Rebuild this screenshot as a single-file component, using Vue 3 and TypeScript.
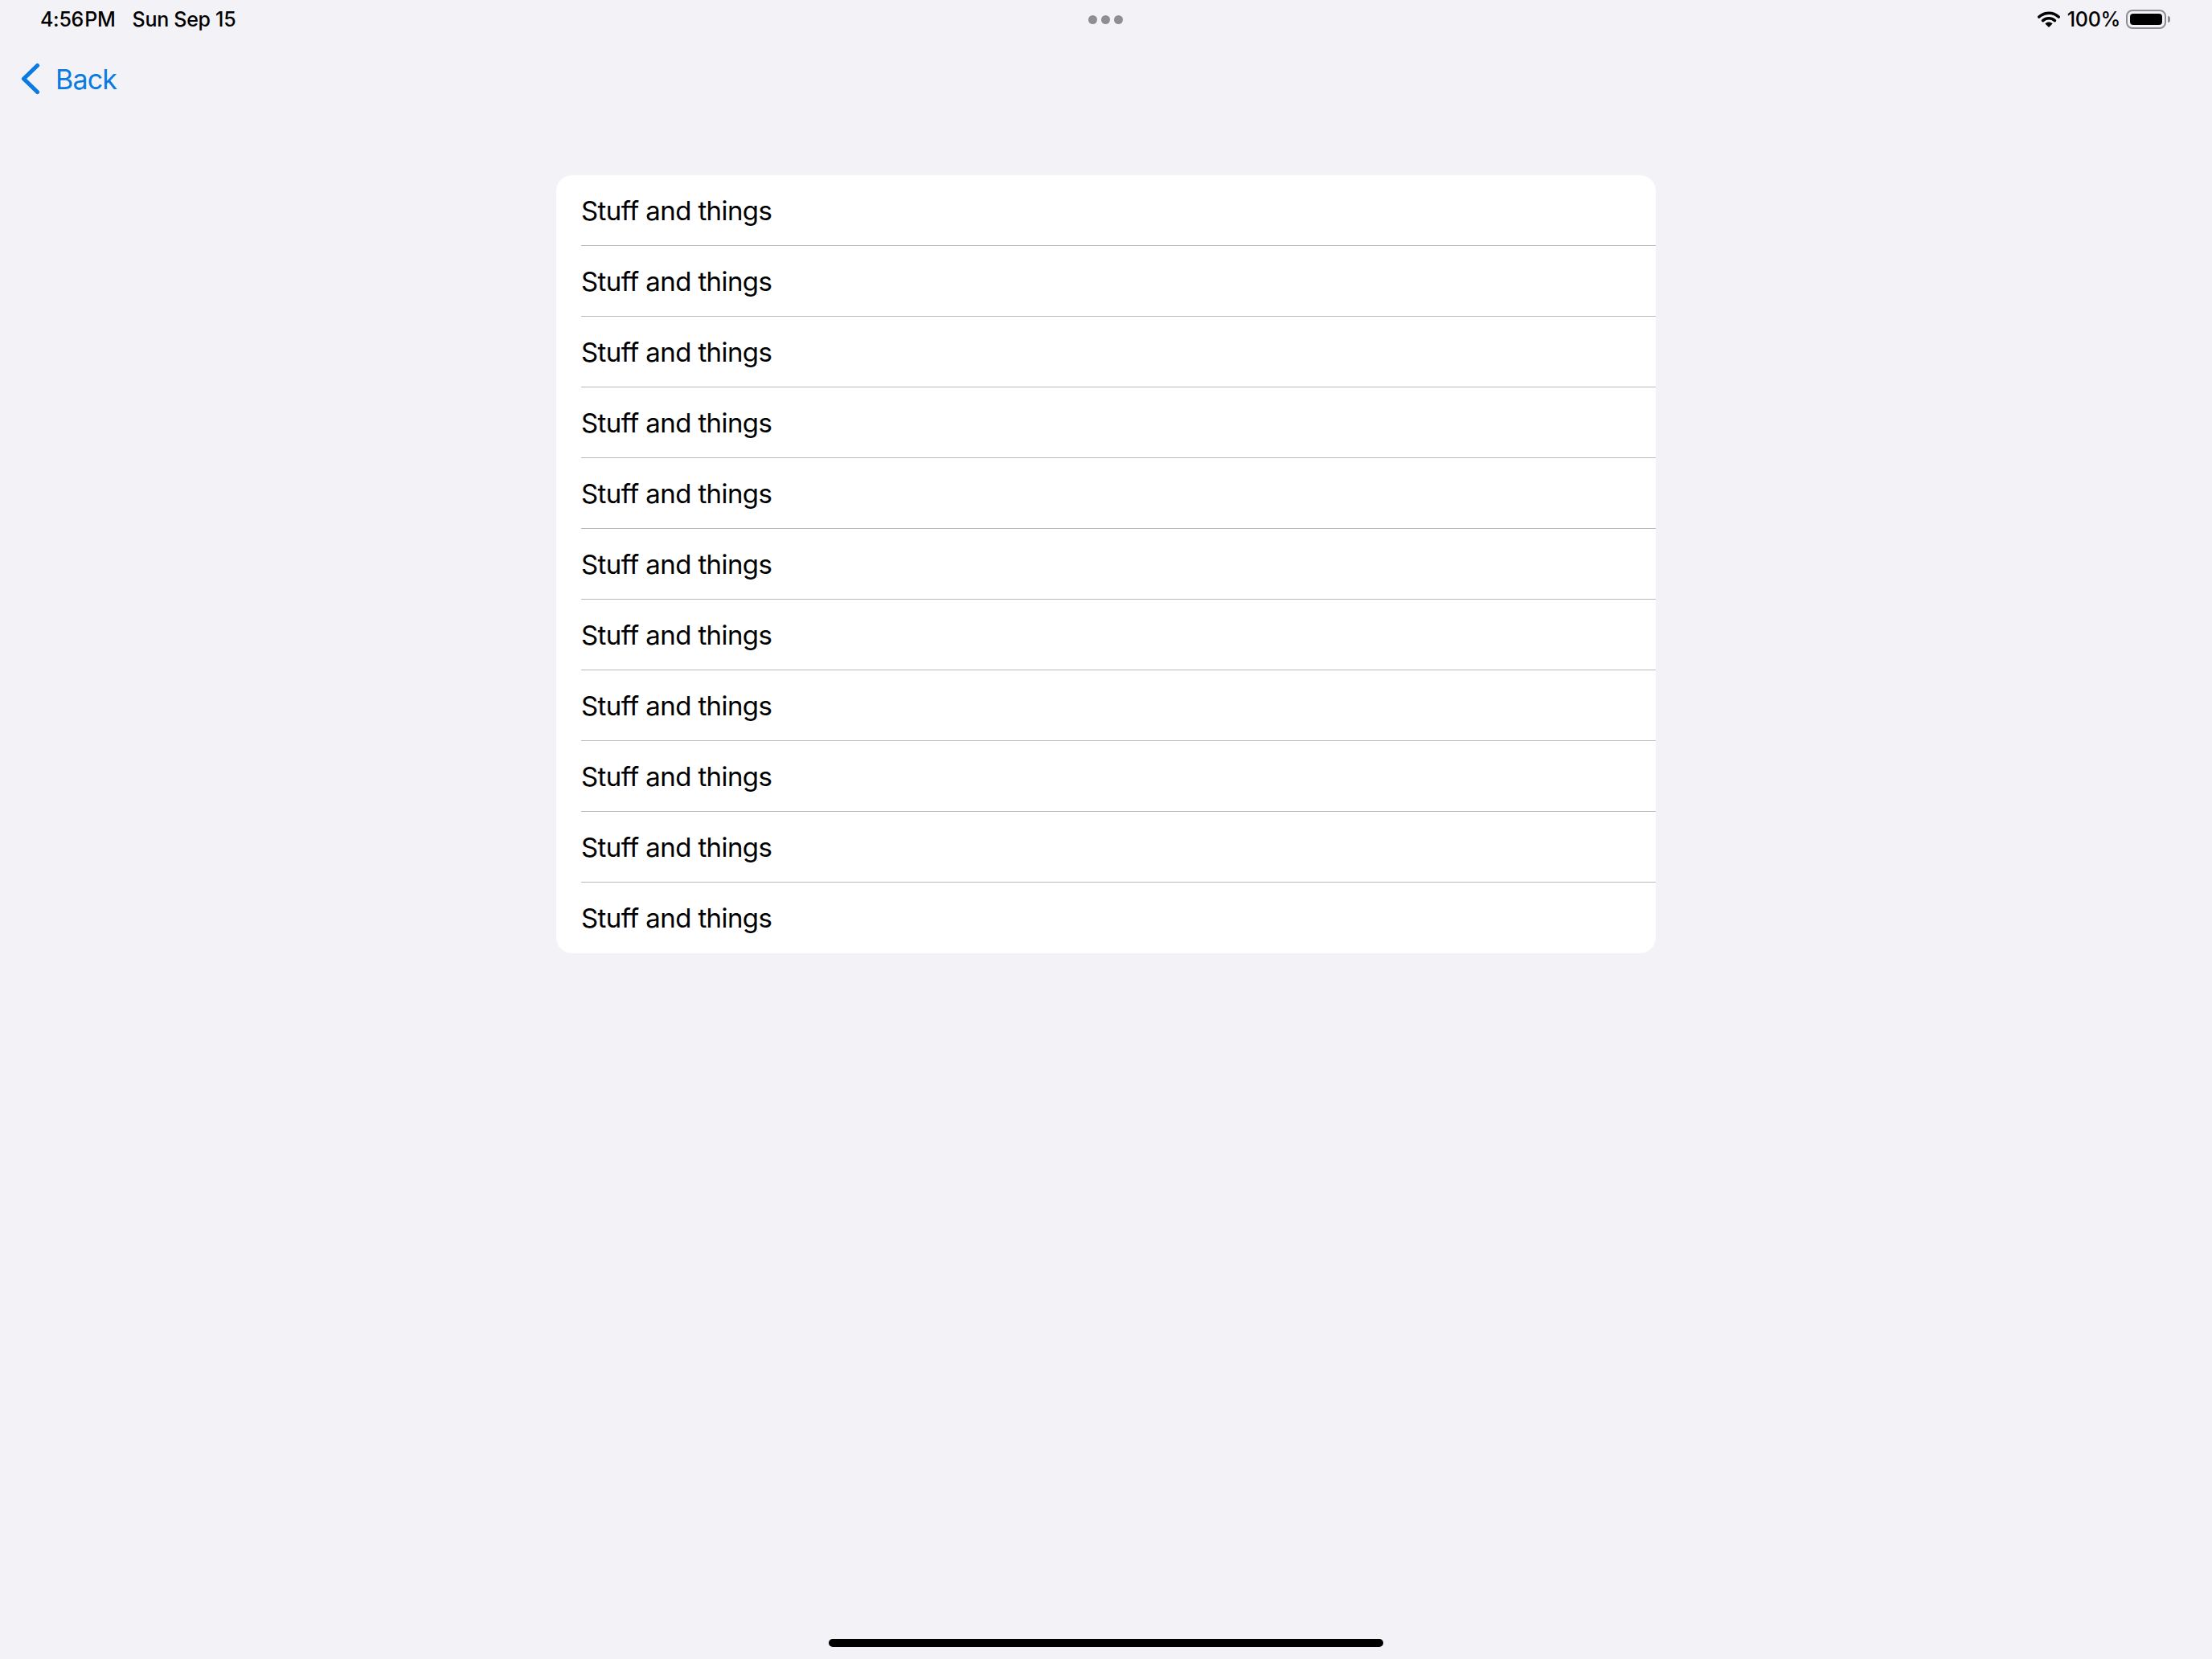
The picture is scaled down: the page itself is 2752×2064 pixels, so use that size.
<script setup lang="ts">
const rows: string[] = Array.from({ length: 11 }, () => 'Stuff and things')
</script>

<template>
  <div class="screen">
    <header class="status-bar">
      <div class="status-left">
        <span class="time">4:56 PM</span>
        <span>Sun Sep 15</span>
      </div>
      <div class="dots"><i></i><i></i><i></i></div>
      <div class="status-right">
        <svg class="wifi" width="28" height="20" viewBox="0 0 28 20">
          <path d="M1.8 7C8.8 0.6 19.2 0.6 26.2 7" fill="none" stroke="#000" stroke-width="3.6" stroke-linecap="round" />
          <path d="M6.6 11.6C10.9 7.8 17.1 7.8 21.4 11.6" fill="none" stroke="#000" stroke-width="3.6" stroke-linecap="round" />
          <path d="M14 20L9.4 15.4C12.1 13 15.9 13 18.6 15.4Z" fill="#000" />
        </svg>
        <span class="percent">100%</span>
        <div class="battery">
          <div class="battery-body"><div class="battery-fill"></div></div>
          <div class="battery-nub"></div>
        </div>
      </div>
    </header>

    <nav class="nav-bar">
      <svg class="chevron" width="26" height="40" viewBox="0 0 26 40">
        <path d="M21.5 3.5L4.5 20L21.5 36.5" fill="none" stroke="#0a7be0" stroke-width="5.2" stroke-linecap="round" stroke-linejoin="round" />
      </svg>
      <span class="back">Back</span>
    </nav>

    <main class="content">
      <ul class="list">
        <li v-for="(row, i) in rows" :key="i" class="row">
          <span class="row-inner">{{ row }}</span>
        </li>
      </ul>
    </main>

    <div class="home-bar"></div>
  </div>
</template>

<style scoped>
.screen {
  display: flex;
  flex-direction: column;
  width: 2752px;
  height: 2064px;
  background: #f2f2f7;
  font-family: Inter, "Liberation Sans", sans-serif;
  color: #000;
  overflow: hidden;
}

.status-bar {
  display: grid;
  grid-template-columns: 1fr auto 1fr;
  align-items: center;
  height: 48px;
  padding: 0 52px 0 50px;
  font-size: 25px;
  font-weight: 500;
  letter-spacing: -0.3px;
}

.status-left {
  display: flex;
  gap: 21px;
}

.time {
  word-spacing: -5px;
}

.dots {
  display: flex;
  gap: 5px;
}

.dots i {
  width: 11px;
  height: 11px;
  border-radius: 50%;
  background: #8e8e93;
}

.status-right {
  display: flex;
  justify-content: flex-end;
  align-items: center;
}

.percent {
  margin: 0 7px 0 9px;
}

.battery {
  display: flex;
  align-items: center;
  gap: 2px;
}

.battery-body {
  width: 50px;
  height: 24px;
  padding: 3px;
  box-sizing: border-box;
  border: 2px solid #8e8e93;
  border-radius: 8px;
}

.battery-fill {
  height: 100%;
  border-radius: 4px;
  background: #000;
}

.battery-nub {
  width: 3px;
  height: 8px;
  border-radius: 0 3px 3px 0;
  background: #8e8e93;
}

.nav-bar {
  display: flex;
  align-items: center;
  gap: 18px;
  height: 100px;
  padding: 0 0 0 25px;
  color: #0a7be0;
  font-size: 34px;
  letter-spacing: -0.8px;
}

.chevron {
  flex: none;
}

.content {
  display: flex;
  justify-content: center;
  padding-top: 70px;
}

.list {
  width: 1368px;
  margin: 0;
  padding: 0;
  list-style: none;
  background: #fff;
  border-radius: 20px;
  overflow: hidden;
}

.row {
  height: 88px;
  padding-left: 31px;
  font-size: 33px;
  letter-spacing: -0.6px;
}

.row-inner {
  display: flex;
  align-items: center;
  height: 100%;
  box-sizing: border-box;
  border-bottom: 1px solid #b9b9bc;
}

.row:last-child .row-inner {
  border-bottom: none;
}

.home-bar {
  width: 690px;
  height: 10px;
  margin: auto auto 15px;
  border-radius: 5px;
  background: #000;
}
</style>
